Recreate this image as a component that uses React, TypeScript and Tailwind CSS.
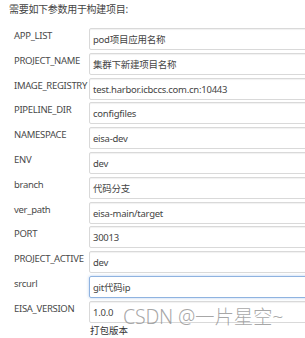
const rows: { label: string; value: string; focus?: boolean }[] = [
  { label: "APP_LIST", value: "pod项目应用名称" },
  { label: "PROJECT_NAME", value: "集群下新建项目名称" },
  { label: "IMAGE_REGISTRY", value: "test.harbor.icbccs.com.cn:10443" },
  { label: "PIPELINE_DIR", value: "configfiles" },
  { label: "NAMESPACE", value: "eisa-dev" },
  { label: "ENV", value: "dev" },
  { label: "branch", value: "代码分支" },
  { label: "ver_path", value: "eisa-main/target" },
  { label: "PORT", value: "30013" },
  { label: "PROJECT_ACTIVE", value: "dev" },
  { label: "srcurl", value: "git代码ip", focus: true },
  { label: "EISA_VERSION", value: "1.0.0" },
];

const font = { fontFamily: '"Noto Sans", "Noto Sans CJK SC", sans-serif' };

export default function App() {
  return (
    <div
      className="relative h-[338px] w-[305px] overflow-hidden bg-white text-[#444]"
      style={font}
    >
      <p className="pl-[9px] pt-[2px] text-[10px] leading-[14px] tracking-[-0.3px] text-[#444]">
        需要如下参数用于构建项目:
      </p>

      <div className="mt-[12px] flex flex-col gap-[2.8px]">
        {rows.map((r) => (
          <div key={r.label} className="flex">
            <div className="w-[89px] shrink-0 pl-[14px] pt-[1px] text-[9.5px] leading-[14px] tracking-[-0.3px] text-[#4a4a4a]">
              {r.label}
            </div>
            <div className="flex-1">
              <div
                className={
                  r.focus
                    ? "-mr-4 flex h-[22px] items-end rounded-[2px] border border-[#8fb3e0] pb-[2px] pl-[3px] text-[9.5px] leading-[14px] tracking-[-0.25px] text-[#444] shadow-[0_0_3px_rgba(102,153,220,0.5)]"
                    : "-mr-4 flex h-[22px] items-end rounded-[2px] border border-[#d9d9d9] pb-[2px] pl-[3px] text-[9.5px] leading-[14px] tracking-[-0.25px] text-[#444] shadow-[inset_0_1px_1px_rgba(0,0,0,0.06)]"
                }
              >
                {r.value}
              </div>
              {r.label === "EISA_VERSION" && (
                <div className="pl-[1px] pt-[1px] text-[9.5px] leading-[13px] text-[#333]">
                  打包版本
                </div>
              )}
            </div>
          </div>
        ))}
      </div>

      <div className="pointer-events-none absolute left-[123px] top-[305px] whitespace-nowrap text-[19.5px] font-light leading-[24px] tracking-[-0.2px] text-[#8a8a8a]/75">
        CSDN @一片星空~
      </div>
    </div>
  );
}
